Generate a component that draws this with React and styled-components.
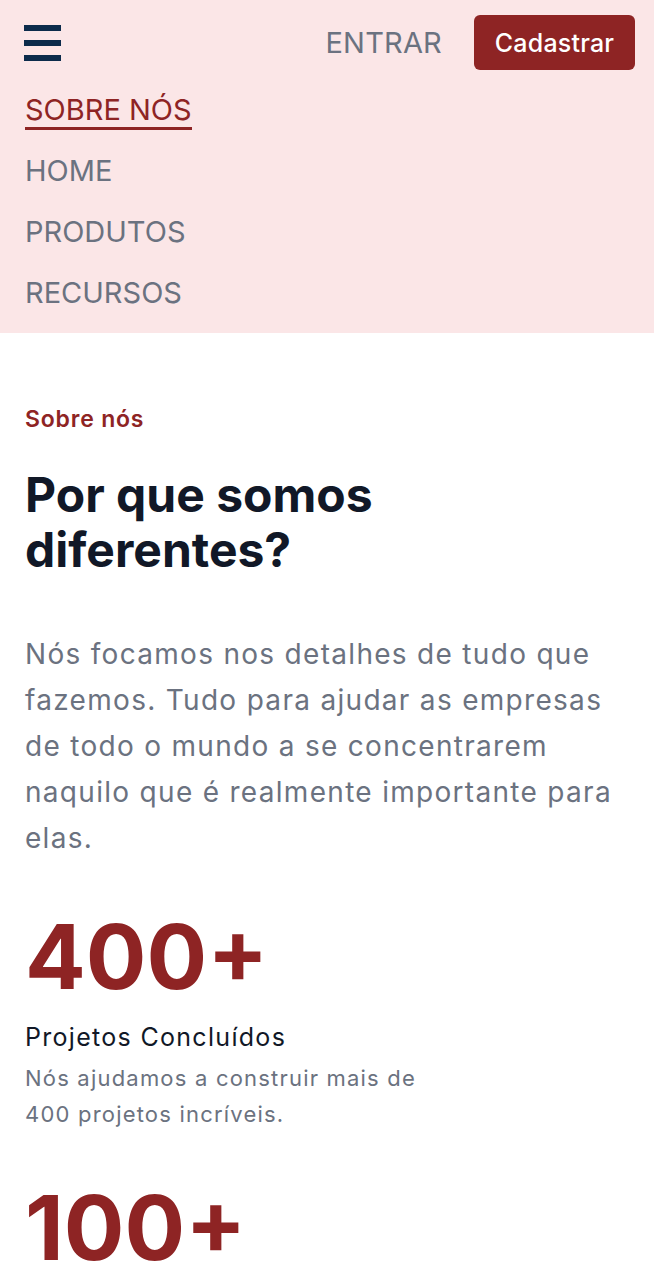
import React from "react";
import styled, { createGlobalStyle } from "styled-components";

const Global = createGlobalStyle`
  html, body { margin: 0; padding: 0; background: #ffffff; }
  body { font-family: Inter, "Noto Sans", sans-serif; -webkit-font-smoothing: antialiased; }
  * { box-sizing: border-box; }
`;

const Page = styled.div`
  width: 654px;
  min-height: 1280px;
  background: #ffffff;
  overflow: hidden;
`;

const Header = styled.header`
  background: #fbe6e7;
  padding: 15px 19px 20px 25px;
`;

const TopRow = styled.div`
  display: flex;
  align-items: center;
  height: 55px;
`;

const Burger = styled.button`
  display: flex;
  flex-direction: column;
  gap: 9px;
  width: 37px;
  padding: 0;
  margin: 0 0 0 -1px;
  border: 0;
  background: transparent;
  cursor: pointer;
`;

const Bar = styled.span`
  display: block;
  height: 6px;
  width: 37px;
  background: #0c2b4b;
`;

const Actions = styled.div`
  margin-left: auto;
  display: flex;
  align-items: center;
  gap: 32px;
`;

const Login = styled.a`
  font-size: 29px;
  color: #6b7280;
  text-decoration: none;
  letter-spacing: 0.2px;
`;

const SignUp = styled.button`
  height: 55px;
  width: 161px;
  border: 0;
  border-radius: 6px;
  background: #8e2424;
  color: #ffffff;
  font-family: inherit;
  font-size: 25px;
  font-weight: 500;
  letter-spacing: 0.2px;
  padding: 0;
`;

const Nav = styled.nav`
  display: flex;
  flex-direction: column;
  align-items: flex-start;
  gap: 23px;
  margin-top: 22px;
`;

const NavLink = styled.a`
  display: inline-block;
  font-size: 29px;
  line-height: 35px;
  color: ${(p) => (p.$active ? "#8e2424" : "#6b7280")};
  border-bottom: 3px solid ${(p) => (p.$active ? "#8e2424" : "transparent")};
  text-decoration: none;
`;

const Main = styled.main`
  padding: 70px 25px 0 25px;
`;

const Eyebrow = styled.p`
  margin: 0;
  font-size: 23px;
  line-height: 32px;
  font-weight: 600;
  letter-spacing: 0.8px;
  color: #8e2424;
`;

const Title = styled.h1`
  margin: 32px 0 0;
  font-size: 48px;
  line-height: 55px;
  font-weight: 700;
  color: #111827;
`;

const Lead = styled.p`
  margin: 54px 0 0;
  font-size: 28px;
  line-height: 46px;
  letter-spacing: 1.3px;
  color: #6b7280;
`;

const Stats = styled.section`
  display: flex;
  flex-direction: column;
  gap: 50px;
  margin-top: 50px;
`;

const Stat = styled.div`
  display: flex;
  flex-direction: column;
`;

const Number = styled.div`
  font-size: 90px;
  line-height: 92px;
  font-weight: 700;
  color: #8e2424;
`;

const StatTitle = styled.h3`
  margin: 16px 0 0;
  font-size: 25px;
  line-height: 36px;
  font-weight: 400;
  letter-spacing: 1.3px;
  color: #111827;
`;

const StatText = styled.p`
  margin: 5px 0 0;
  max-width: 410px;
  font-size: 22px;
  line-height: 36px;
  letter-spacing: 1.2px;
  color: #6b7280;
`;

const stats = [
  { n: "400+", t: "Projetos Concluídos", d: "Nós ajudamos a construir mais de 400 projetos incríveis." },
  { n: "100+" },
];

export default function App() {
  return (
    <Page>
      <Global />
      <Header>
        <TopRow>
          <Burger aria-label="menu">
            <Bar />
            <Bar />
            <Bar />
          </Burger>
          <Actions>
            <Login href="#">ENTRAR</Login>
            <SignUp>Cadastrar</SignUp>
          </Actions>
        </TopRow>
        <Nav>
          <NavLink href="#" $active>SOBRE NÓS</NavLink>
          <NavLink href="#">HOME</NavLink>
          <NavLink href="#">PRODUTOS</NavLink>
          <NavLink href="#">RECURSOS</NavLink>
        </Nav>
      </Header>
      <Main>
        <Eyebrow>Sobre nós</Eyebrow>
        <Title>Por que somos diferentes?</Title>
        <Lead>
          Nós focamos nos detalhes de tudo que fazemos. Tudo para ajudar as empresas de todo o
          mundo a se concentrarem naquilo que é realmente importante para elas.
        </Lead>
        <Stats>
          {stats.map((s) => (
            <Stat key={s.n}>
              <Number>{s.n}</Number>
              {s.t && <StatTitle>{s.t}</StatTitle>}
              {s.d && <StatText>{s.d}</StatText>}
            </Stat>
          ))}
        </Stats>
      </Main>
    </Page>
  );
}
